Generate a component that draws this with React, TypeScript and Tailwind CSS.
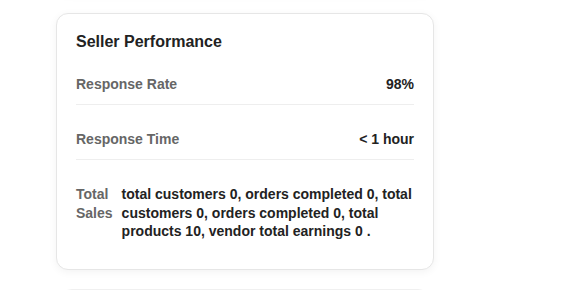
import React from 'react';

const rows = [
  { label: 'Response Rate', value: '98%' },
  { label: 'Response Time', value: '< 1 hour' },
];

const SellerPerformance: React.FC = () => {
  return (
    <div className="rounded-xl border border-[#e6e6e6] bg-white px-[19px] pt-4 pb-[28px] shadow-[0_2px_8px_rgba(0,0,0,0.05)]">
      {/* Title */}
      <h3 className="text-base font-bold leading-6 text-[#222]">Seller Performance</h3>

      <div className="mt-5 flex flex-col gap-6">
        {rows.map((row) => (
          <div
            key={row.label}
            className="flex items-center justify-between border-b border-[#eeeeee] pb-[10px] text-sm leading-5"
          >
            <span className="font-bold text-[#666]">{row.label}</span>
            <span className="font-bold text-[#222]">{row.value}</span>
          </div>
        ))}

        {/* Total sales */}
        <div className="mt-[1px] flex gap-[9px] text-sm leading-[18.5px]">
          <span className="w-min font-bold text-[#666]">Total Sales</span>
          <span className="flex-1 font-bold text-[#222]">
            total customers 0, orders completed 0, total customers 0, orders completed 0, total products 10, vendor total earnings 0 .
          </span>
        </div>
      </div>
    </div>
  );
};

export default function App() {
  return (
    <div className="h-[290px] overflow-hidden bg-white font-['Liberation_Sans',Arial,sans-serif]">
      <div className="ml-[56px] w-[378px] flex flex-col gap-[19px]">
        <div className="-mt-[60px] h-[54px] rounded-xl border border-[#f0f0f0] bg-white shadow-[0_2px_8px_rgba(0,0,0,0.04)]" />
        <SellerPerformance />
        <div className="mx-1 h-[60px] rounded-xl border border-[#f0f0f0] bg-white" />
      </div>
    </div>
  );
}
